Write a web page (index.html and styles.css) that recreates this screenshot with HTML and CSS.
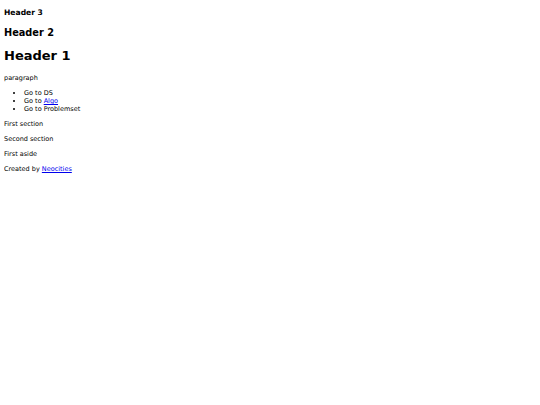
FILE: index.html
```html
<!DOCTYPE html>
<html>
<head>
<meta charset="utf-8">
<title>Page</title>
<link rel="stylesheet" href="styles.css">
</head>
<body class="page">
<header class="top">
<h3 class="h3">Header 3</h3>
<h2 class="h2">Header 2</h2>
<h1 class="h1">Header 1</h1>
</header>
<main class="content">
<p class="para">paragraph</p>
<ul class="links">
<li>Go to DS</li>
<li>Go to <a class="link" href="#">Algo</a></li>
<li>Go to Problemset</li>
</ul>
<section class="sec"><p class="para">First section</p></section>
<section class="sec"><p class="para">Second section</p></section>
<aside class="side"><p class="para">First aside</p></aside>
</main>
<footer class="foot"><p class="para">Created by <a class="link" href="#">Neocities</a></p></footer>
</body>
</html>
```
FILE: styles.css
```css
html {
  font-size: 6.5px;
}
.page {
  margin: 4px;
  font-family: "DejaVu Sans", Verdana, sans-serif;
  font-size: 6.5px;
  line-height: 8px;
  color: #000;
  background: #fff;
}
.h3 { font-size: 7.6px; line-height: 9px; margin: 4px 0 10px; font-weight: bold; }
.h2 { font-size: 9.75px; line-height: 11px; margin: 10px 0 10px; font-weight: bold; }
.h1 { font-size: 13px; line-height: 15px; margin: 10px 0 11px; font-weight: bold; }
.para { margin: 7px 0; line-height: 8px; }
.links { margin: 4px 0 7px; padding-left: 20px; line-height: 8px; }
.link { color: #0000ee; text-decoration: underline; }
```
